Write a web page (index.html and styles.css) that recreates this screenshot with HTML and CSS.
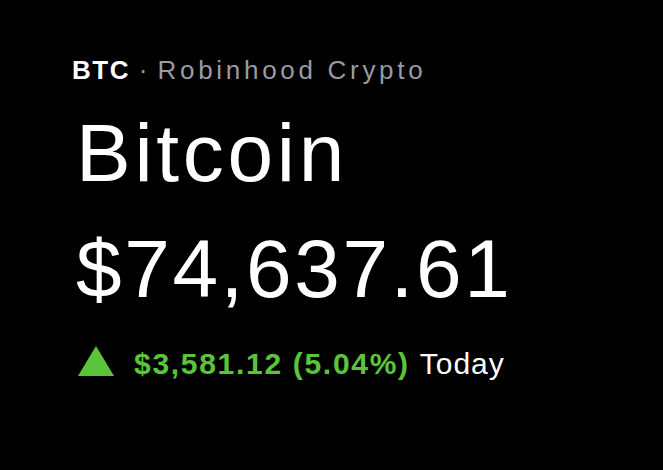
FILE: index.html
```html
<!DOCTYPE html>
<html>
<head>
<meta charset="utf-8">
<link rel="stylesheet" href="styles.css">
</head>
<body>
<main class="quote">
  <div class="meta"><span class="ticker">BTC</span><span class="sep"> · </span><span class="exchange">Robinhood Crypto</span></div>
  <h1 class="name">Bitcoin</h1>
  <div class="price">$74,637.61</div>
  <div class="change">
    <svg class="arrow" width="36" height="30" viewBox="0 0 36 30"><polygon points="18,0 36,30 0,30" fill="#5ac53b"/></svg>
    <span class="delta">$3,581.12 (5.04%)</span>
    <span class="period">Today</span>
  </div>
</main>
</body>
</html>
```
FILE: styles.css
```css
html, body {
  margin: 0;
  padding: 0;
  background: #000;
  height: 100%;
}
body {
  font-family: "Liberation Sans", Arial, sans-serif;
  color: #fff;
}
.quote {
  display: flex;
  flex-direction: column;
  padding: 57px 0 0 76px;
}
.meta {
  margin-left: -4px;
  font-size: 26px;
  line-height: 26px;
  white-space: nowrap;
}
.ticker {
  font-weight: 700;
  letter-spacing: 1.5px;
}
.sep {
  color: #979ca2;
  letter-spacing: 1.5px;
}
.exchange {
  color: #979ca2;
  letter-spacing: 3.7px;
}
.name {
  margin: 29px 0 0;
  font-size: 82px;
  font-weight: 400;
  line-height: 82px;
  letter-spacing: 3.7px;
}
.price {
  margin-top: 34px;
  font-size: 82px;
  line-height: 82px;
  letter-spacing: 2.6px;
}
.change {
  margin-top: 39px;
  display: flex;
  align-items: flex-end;
  font-size: 30px;
  line-height: 30px;
}
.arrow {
  display: block;
  align-self: flex-start;
  margin: -3px 20px 0 2px;
}
.delta {
  color: #5ac53b;
  font-weight: 700;
  letter-spacing: 1.7px;
}
.period {
  margin-left: 10px;
  color: #fff;
  letter-spacing: 1px;
}
```
